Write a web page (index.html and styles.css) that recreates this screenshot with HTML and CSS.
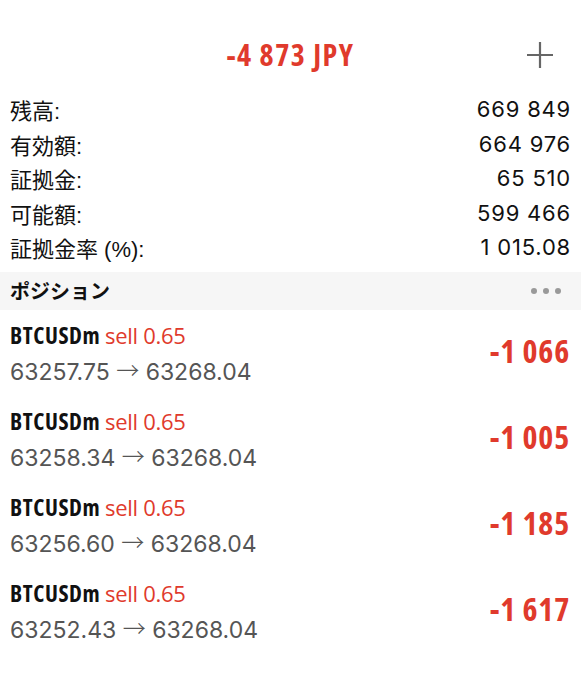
FILE: index.html
```html
<!DOCTYPE html>
<html lang="ja">
<head>
    <meta charset="UTF-8">
    <meta name="viewport" content="width=device-width, initial-scale=1.0">
    <title>取引</title>
    <link rel="stylesheet" href="styles.css">
</head>
<body>
    <header class="top">
        <div class="total">-4 873 JPY</div>
        <button class="add" type="button" aria-label="追加">
            <svg width="28" height="28" viewBox="0 0 28 28">
                <path d="M14 1v26M1 14h26" stroke="#666" stroke-width="2.2" fill="none"/>
            </svg>
        </button>
    </header>

    <div class="summary">
        <div class="row"><span>残高:</span><span class="num">669 849</span></div>
        <div class="row"><span>有効額:</span><span class="num">664 976</span></div>
        <div class="row"><span>証拠金:</span><span class="num">65 510</span></div>
        <div class="row"><span>可能額:</span><span class="num">599 466</span></div>
        <div class="row"><span>証拠金率 (%):</span><span class="num">1 015.08</span></div>
    </div>

    <div class="section">
        <span>ポジション</span>
        <span class="dots"><i></i><i></i><i></i></span>
    </div>

    <div class="positions">
        <div class="position">
            <div class="info">
                <div class="symbol">BTCUSDm <span class="side">sell 0.65</span></div>
                <div class="prices">63257.75 <span class="arrow">→</span> 63268.04</div>
            </div>
            <div class="profit">-1 066</div>
        </div>
        <div class="position">
            <div class="info">
                <div class="symbol">BTCUSDm <span class="side">sell 0.65</span></div>
                <div class="prices">63258.34 <span class="arrow">→</span> 63268.04</div>
            </div>
            <div class="profit">-1 005</div>
        </div>
        <div class="position">
            <div class="info">
                <div class="symbol">BTCUSDm <span class="side">sell 0.65</span></div>
                <div class="prices">63256.60 <span class="arrow">→</span> 63268.04</div>
            </div>
            <div class="profit">-1 185</div>
        </div>
        <div class="position">
            <div class="info">
                <div class="symbol">BTCUSDm <span class="side">sell 0.65</span></div>
                <div class="prices">63252.43 <span class="arrow">→</span> 63268.04</div>
            </div>
            <div class="profit">-1 617</div>
        </div>
    </div>
</body>
</html>
```

FILE: styles.css
```css
body {
    font-family: "Liberation Sans", "Noto Sans CJK JP", sans-serif;
    background-color: #ffffff;
    color: #111;
    margin: 0;
    padding: 0;
}

.top {
    position: relative;
    height: 92px;
    display: flex;
    align-items: center;
    justify-content: center;
}

.total {
    font-family: "Open Sans", sans-serif;
    font-stretch: 75%;
    font-weight: 700;
    font-size: 30px;
    letter-spacing: 1.5px;
    color: #e03a2c;
    margin-top: 17px;
}

.add {
    position: absolute;
    right: 27px;
    top: 41px;
    background: none;
    border: none;
    padding: 0;
    width: 28px;
    height: 28px;
}

.summary {
    padding: 0 10px;
}

.row {
    display: flex;
    justify-content: space-between;
    align-items: center;
    height: 34.5px;
    font-size: 22px;
}

.num {
    font-family: Inter, "Liberation Sans", sans-serif;
    letter-spacing: 0.8px;
}

.section {
    margin-top: 7px;
    background: #f6f6f6;
    height: 38px;
    padding: 0 10px;
    display: flex;
    justify-content: space-between;
    align-items: center;
    font-size: 20px;
    font-weight: bold;
}

.dots {
    display: flex;
    gap: 6px;
    margin-right: 10px;
}

.dots i {
    width: 6px;
    height: 6px;
    border-radius: 50%;
    background: #999;
}

.position {
    display: flex;
    justify-content: space-between;
    align-items: center;
    height: 86px;
    padding: 0 12px 0 10px;
}

.symbol {
    font-family: "Open Sans", sans-serif;
    font-stretch: 75%;
    font-weight: 700;
    font-size: 23px;
    line-height: 31px;
    letter-spacing: 0.6px;
    color: #111;
}

.side {
    font-stretch: 100%;
    font-weight: 400;
    font-size: 22px;
    letter-spacing: -0.3px;
    color: #e03a2c;
}

.prices {
    font-family: Inter, "Liberation Sans", sans-serif;
    font-size: 23px;
    line-height: 28px;
    color: #555;
    margin-top: 7px;
}

.arrow {
    font-family: "Noto Sans CJK JP", sans-serif;
    font-weight: 300;
    line-height: 1;
    vertical-align: 1px;
}

.profit {
    font-family: "Open Sans", sans-serif;
    font-stretch: 75%;
    font-weight: 700;
    font-size: 32px;
    letter-spacing: 0.8px;
    color: #e03a2c;
    margin-right: -1px;
    margin-bottom: 4px;
}
```
